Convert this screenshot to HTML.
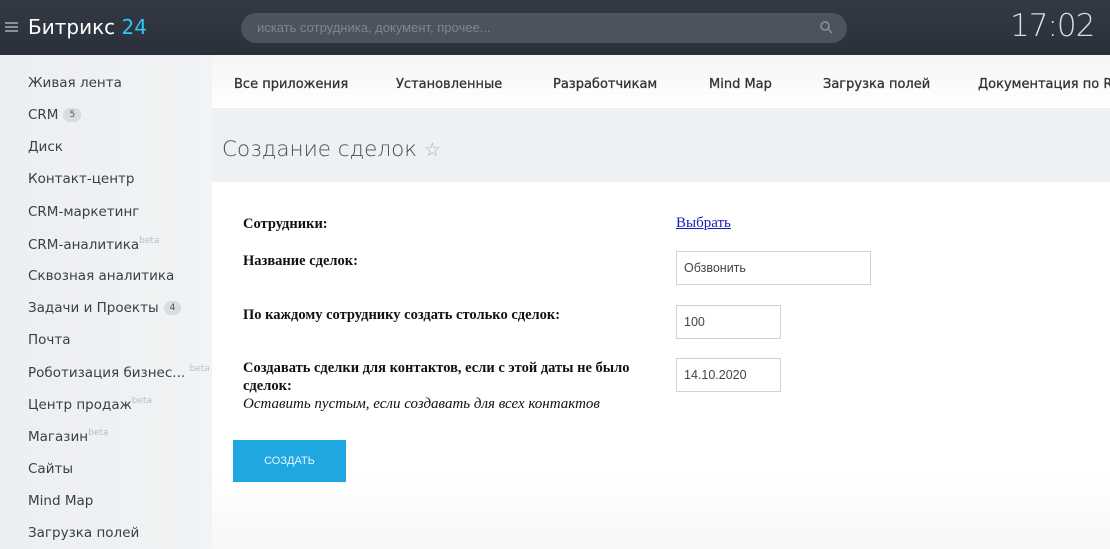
<!DOCTYPE html>
<html><head><meta charset="utf-8"><style>
*{margin:0;padding:0;box-sizing:border-box}
body{width:1110px;height:549px;overflow:hidden;position:relative;background:#eef0f3;font-family:"Liberation Sans","DejaVu Sans",sans-serif}
.hdr{position:absolute;left:0;top:0;width:1110px;height:55px;background:linear-gradient(#343a45,#2a303a)}
.logo{position:absolute;left:28px;top:15px;font-size:20px;color:#fff;font-family:"DejaVu Sans",sans-serif}
.logo b{color:#2fc6f6;font-weight:normal}
.burger{position:absolute;left:5px;top:22px;width:13px;height:10px;border-top:2px solid #8a9099;border-bottom:2px solid #8a9099}
.burger:after{content:"";position:absolute;left:0;top:2px;width:13px;height:2px;background:#8a9099}
.search{position:absolute;left:241px;top:13px;width:606px;height:30px;border-radius:15px;background:#4b535d;color:#7e868f;font-size:13px;padding:7px 0 0 16px}
.search svg{position:absolute;right:14px;top:8px}
.time{position:absolute;left:1010px;top:8px;font-size:31px;color:#d8dce0;font-family:"DejaVu Sans",sans-serif;font-weight:200;letter-spacing:-1px}
.side{position:absolute;left:0;top:55px;width:212px;height:494px;background:linear-gradient(90deg,#eceff2,#f1f3f5)}
.side div{position:absolute;left:28px;color:#3a3f45;font-family:"DejaVu Sans",sans-serif;font-size:13.5px}
.side sup{font-size:9px;color:#b8bec5;vertical-align:6px}
.badge{display:inline-block;background:#d8dce1;color:#555;border-radius:9px;font-size:9px;padding:2px 6px;margin-left:5px;vertical-align:2px}
.nav{position:absolute;left:212px;top:55px;width:898px;height:53px;background:linear-gradient(#f4f5f6,#fff)}
.nav span{position:absolute;top:22px;font-size:13px;color:#333;font-family:"DejaVu Sans",sans-serif;white-space:nowrap;-webkit-text-stroke:0.3px #333}
.titlebar{position:absolute;left:212px;top:108px;width:898px;height:74px;background:#eef1f4}
.title{position:absolute;left:10px;top:29px;font-size:21.5px;color:#4a4f55;font-family:"DejaVu Sans",sans-serif;font-weight:300}
.content{position:absolute;left:212px;top:182px;width:898px;height:367px;background:linear-gradient(#fff 80%,#f6f7f8)}
.lbl{position:absolute;left:31px;font-family:"Liberation Serif",serif;font-weight:bold;font-size:14.5px;color:#111;line-height:18px}
.lbl i{font-weight:normal;font-size:15px}
.inp{position:absolute;left:464px;height:34px;border:1px solid #cfd2d5;background:#fff;font-size:12.5px;color:#444;padding:9px 0 0 7px}
a{position:absolute;left:464px;top:33px;font-family:"Liberation Serif",serif;font-size:15px;color:#1a1ab0;text-decoration:underline}
.btn{position:absolute;left:21px;top:258px;width:113px;height:42px;background:#1ea7e0;color:#e8f6fc;font-size:11px;text-align:center;line-height:42px}
</style></head><body>
<div class="hdr">
<div class="burger"></div>
<div class="logo">Битрикс <b>24</b></div>
<div class="search">искать сотрудника, документ, прочее...<svg width="13" height="13" viewBox="0 0 13 13"><circle cx="5" cy="5" r="4" fill="none" stroke="#8a9199" stroke-width="1.5"/><path d="M8 8l4 4" stroke="#8a9199" stroke-width="1.5"/></svg></div>
<div class="time">17:02</div>
</div>
<div class="side">
<div style="top:20px">Живая лента</div>
<div style="top:52px">CRM<span class="badge">5</span></div>
<div style="top:84px">Диск</div>
<div style="top:116px">Контакт-центр</div>
<div style="top:149px">CRM-маркетинг</div>
<div style="top:181px">CRM-аналитика<sup>beta</sup></div>
<div style="top:213px">Сквозная аналитика</div>
<div style="top:245px">Задачи и Проекты<span class="badge">4</span></div>
<div style="top:277px">Почта</div>
<div style="top:309px">Роботизация бизнес... <sup>beta</sup></div>
<div style="top:341px">Центр продаж<sup>beta</sup></div>
<div style="top:373px">Магазин<sup>beta</sup></div>
<div style="top:406px">Сайты</div>
<div style="top:438px">Mind Map</div>
<div style="top:470px">Загрузка полей</div>
</div>
<div class="nav">
<span style="left:22px">Все приложения</span>
<span style="left:184px">Установленные</span>
<span style="left:341px">Разработчикам</span>
<span style="left:497px">Mind Map</span>
<span style="left:611px">Загрузка полей</span>
<span style="left:766px">Документация по REST</span>
</div>
<div class="titlebar"><div class="title">Создание сделок <span style="color:#aab0b6;font-size:19px">☆</span></div></div>
<div class="content">
<div class="lbl" style="top:33px">Сотрудники:</div>
<a>Выбрать</a>
<div class="lbl" style="top:70px">Название сделок:</div>
<div class="inp" style="top:69px;width:195px">Обзвонить</div>
<div class="lbl" style="top:124px">По каждому сотруднику создать столько сделок:</div>
<div class="inp" style="top:123px;width:105px">100</div>
<div class="lbl" style="top:177px">Создавать сделки для контактов, если с этой даты не было<br>сделок:<br><i>Оставить пустым, если создавать для всех контактов</i></div>
<div class="inp" style="top:176px;width:105px">14.10.2020</div>
<div class="btn">СОЗДАТЬ</div>
</div>
</body></html>
